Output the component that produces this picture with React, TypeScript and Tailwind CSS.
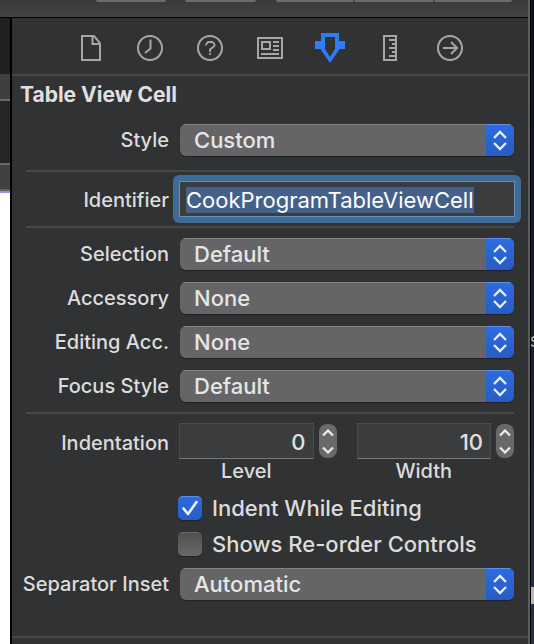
import { useEffect, useRef, type ReactNode } from "react";

const LABEL = "text-right text-[20px] leading-6 font-medium whitespace-nowrap text-[#dcdcdd]";
const ROW = "grid grid-cols-[157px_1fr] items-center gap-x-[11px] pr-[14px]";

function Divider() {
  return <div className="mx-[14px] h-[2px] bg-[#464749]" />;
}

function Popup({ id, label, value }: { id: string; label: string; value: string }) {
  return (
    <div className={ROW}>
      <label htmlFor={id} className={LABEL}>
        {label}
      </label>
      <div className="relative h-8 overflow-hidden rounded-md bg-[#656567] shadow-[0_1px_1px_rgba(0,0,0,0.35)]">
        <select
          id={id}
          defaultValue={value}
          className="h-8 w-full appearance-none border-t border-[#858587] bg-transparent pr-8 pb-[2px] pl-[14px] text-[22px] leading-7 font-medium text-[#e6e6e7] outline-none"
        >
          <option>{value}</option>
        </select>
        <span className="pointer-events-none absolute inset-y-0 right-0 flex w-7 items-center justify-center border-t border-[#5f8fe6] bg-linear-to-b from-[#2d6be0] to-[#265cc4]">
          <svg width="16" height="22" viewBox="0 0 16 22" fill="none" stroke="#e8effc" strokeWidth="2.3">
            <path d="M2 8 8 2l6 6M2 13l6 6 6-6" />
          </svg>
        </span>
      </div>
    </div>
  );
}

function NumberField({ id, label, value }: { id: string; label: string; value: string }) {
  return (
    <div className="grid flex-1 grid-cols-[1fr_18px] gap-x-[5px]">
      <input
        id={id}
        defaultValue={value}
        className="h-9 w-full min-w-0 border border-[#4a4b4d] border-b-[#78797b] bg-[#3b3c3e] pt-[2px] pr-[7px] text-right text-[22px] leading-7 font-medium text-[#e0e0e1] outline-none"
      />
      <div className="my-px flex h-[34px] flex-col overflow-hidden rounded-[8px] bg-[#69696b]">
        <button type="button" aria-label={`Increase ${label}`} className="flex flex-1 items-center justify-center">
          <svg width="12" height="8" viewBox="0 0 12 8" fill="none" stroke="#ececed" strokeWidth="2.2">
            <path d="m1 6.5 5-5 5 5" />
          </svg>
        </button>
        <button type="button" aria-label={`Decrease ${label}`} className="flex flex-1 items-center justify-center">
          <svg width="12" height="8" viewBox="0 0 12 8" fill="none" stroke="#ececed" strokeWidth="2.2">
            <path d="m1 1.5 5 5 5-5" />
          </svg>
        </button>
      </div>
      <label htmlFor={id} className="text-center text-[20px] leading-6 font-medium text-[#dcdcdd]">
        {label}
      </label>
    </div>
  );
}

function Check({ label, checked }: { label: string; checked?: boolean }) {
  return (
    <label className="flex h-6 items-center gap-[10px] text-[22px] leading-6 font-medium whitespace-nowrap text-[#dcdcdd]">
      <span className="grid size-6 shrink-0">
        <input
          type="checkbox"
          defaultChecked={checked}
          className="peer col-start-1 row-start-1 size-6 appearance-none rounded-[5px] border-t border-[#6a6a6c] bg-linear-to-b from-[#505052] to-[#68686a] shadow-[0_1px_1px_rgba(0,0,0,0.35)] checked:border-[#5f8fe6] checked:from-[#2d6be0] checked:to-[#265cc4]"
        />
        <svg
          viewBox="0 0 24 24"
          className="pointer-events-none invisible col-start-1 row-start-1 size-6 peer-checked:visible"
          fill="none"
          stroke="#eef3fd"
          strokeWidth="2.6"
          strokeLinecap="round"
          strokeLinejoin="round"
        >
          <path d="m5.5 12.5 4.5 5.5 8.5-12" />
        </svg>
      </span>
      {label}
    </label>
  );
}

function Tab({ name, active, children }: { name: string; active?: boolean; children: ReactNode }) {
  return (
    <button
      type="button"
      aria-label={name}
      aria-pressed={!!active}
      className={`flex w-[60px] justify-center ${active ? "text-[#2f7cf6]" : "text-[#a6a6a8]"}`}
    >
      <svg width="32" height="32" viewBox="0 0 32 32" fill="none" stroke="currentColor" strokeWidth="2">
        {children}
      </svg>
    </button>
  );
}

function InspectorTabs() {
  return (
    <nav aria-label="Inspectors" className="flex h-14 items-center justify-center pt-1">
      <Tab name="File">
        <path d="M8 4h12l6 7v17H8zM18.500 5v7H25" />
      </Tab>
      <Tab name="History">
        <circle cx="16" cy="16" r="12" />
        <path d="M16.500 7.500v9L11 21" />
      </Tab>
      <Tab name="Quick Help">
        <circle cx="16" cy="16" r="12" />
        <path d="M12 13.500v-1L14 10h4.500l2 2v2L16 17.500V20M16 21v2" strokeWidth="1.8" />
      </Tab>
      <Tab name="Identity">
        <path d="M4 6h24v20H4zM8 10h8v7H8zM19 10h6M19 14h6M19 18h6M7 22h18" />
      </Tab>
      <Tab name="Attributes" active>
        <path
          d="M7 1h18v8h6v8h-6v1l-9 13-9-13v-1H1V9h6zM11 5v12l5 8 5-8V5z"
          fill="currentColor"
          fillRule="evenodd"
          stroke="none"
        />
      </Tab>
      <Tab name="Size">
        <path d="M10 4h12v24H10zM15 8h6M18 12h3M15 16h6M18 20h3M15 24h6" />
      </Tab>
      <Tab name="Connections">
        <circle cx="16" cy="16" r="12" />
        <path d="M9 16h13M17 10l6 6-6 6" />
      </Tab>
    </nav>
  );
}

function Toolbar() {
  return (
    <header className="flex h-[18px] items-start border-b border-black bg-linear-to-b from-[#393a3c] to-[#414244] pr-4 pl-24">
      <div className="h-[2px] w-[70px] rounded-b-sm bg-[#6a6b6d]" />
      <div className="ml-[19px] h-[2px] w-[71px] rounded-b-sm bg-[#6a6b6d]" />
      <div className="ml-5 flex h-[2px] flex-1 divide-x-2 divide-[#4c4d4f] overflow-hidden rounded-b-sm bg-[#6a6b6d]">
        <div className="flex-1" />
        <div className="flex-1" />
        <div className="flex-1" />
      </div>
    </header>
  );
}

function EditorEdge() {
  return (
    <div className="flex w-[10px] flex-col">
      <div className="h-14 bg-[#1f2022]" />
      <div className="h-[27px] border-b-2 border-[#69696a] bg-[#3f3f40]" />
      <div className="h-16 border-b-2 border-[#69696a] bg-[#262626]" />
      <div className="h-[26px] border-b-2 border-[#626263] bg-[#414142]" />
      <div className="flex-1 border-t-2 border-[#8b93f5] bg-white" />
    </div>
  );
}

export default function App() {
  const identifier = useRef<HTMLInputElement>(null);

  useEffect(() => {
    identifier.current?.focus();
    identifier.current?.select();
  }, []);

  return (
    <div className="flex min-h-screen overflow-hidden bg-[#313234] font-[Inter,sans-serif]">
      <div className="flex min-w-0 flex-1 flex-col">
        <Toolbar />
        <div className="flex flex-1">
          <EditorEdge />
          <main className="min-w-0 flex-1 border-l-2 border-black bg-[#313234]">
            <InspectorTabs />
            <div className="h-[2px] bg-[#464749]" />
            <h1 className="px-2 pt-[7px] text-[21px] leading-6 font-bold text-[#e0e0e1]">Table View Cell</h1>

            <div className="pt-[17px] pb-[14px]">
              <Popup id="style" label="Style" value="Custom" />
            </div>
            <Divider />

            <div className={`${ROW} h-[54px]`}>
              <label htmlFor="identifier" className={`${LABEL} pt-[2px]`}>
                Identifier
              </label>
              <div className="-mx-[7px] rounded-md bg-[#3e6c96] p-[6px]">
                <input
                  ref={identifier}
                  id="identifier"
                  defaultValue="CookProgramTableViewCell"
                  spellCheck={false}
                  className="block h-9 w-full border border-[#6390b8] bg-[#3b3c3e] px-[6px] pt-[2px] text-[22px] leading-7 text-white caret-transparent outline-none selection:bg-[#45618a] selection:text-white"
                />
              </div>
            </div>
            <Divider />

            <div className="flex flex-col gap-3 py-[10px]">
              <Popup id="selection" label="Selection" value="Default" />
              <Popup id="accessory" label="Accessory" value="None" />
              <Popup id="editing-accessory" label="Editing Acc." value="None" />
              <Popup id="focus-style" label="Focus Style" value="Default" />
            </div>
            <Divider />

            <div className="grid grid-cols-[157px_1fr] gap-x-[10px] pt-[9px] pr-[14px]">
              <span className={`${LABEL} pt-2`}>Indentation</span>
              <div className="flex gap-5">
                <NumberField id="level" label="Level" value="0" />
                <NumberField id="width" label="Width" value="10" />
              </div>
            </div>

            <div className="flex flex-col items-start gap-3 pt-[13px] pb-3 pl-[166px]">
              <Check label="Indent While Editing" checked />
              <Check label="Shows Re-order Controls" />
            </div>

            <Popup id="separator-inset" label="Separator Inset" value="Automatic" />
            <div className="mt-9 h-[2px] bg-[#464749]" />
          </main>
        </div>
      </div>

      <div className="w-[2px] bg-[#5b5c5e]" />
      <div className="flex w-1 flex-col overflow-hidden border-l border-black bg-linear-to-b from-[#0b1020] to-[#283146]">
        <div className="h-[336px] shrink-0" />
        <svg className="h-[11px] w-[3px] shrink-0" viewBox="0 0 3 11" fill="none" stroke="#b9b6b6" strokeWidth="1.5">
          <path d="M3 1Q1 1 1 3t2 2M0 8.500Q1 10 3 10" />
        </svg>
        <div className="h-[240px] shrink-0" />
        <div className="h-[17px] shrink-0 bg-[#b9b6b6]" />
      </div>
    </div>
  );
}
